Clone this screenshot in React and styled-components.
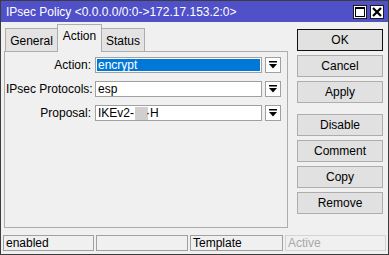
import React from "react";
import styled, { createGlobalStyle } from "styled-components";

const Global = createGlobalStyle`
  html, body { margin: 0; padding: 0; background: #f0f0f0; }
  body { font-family: "Liberation Sans", Arial, sans-serif; font-size: 12px; color: #000; }
  * { box-sizing: border-box; }
`;

const Window = styled.div`
  width: 389px;
  height: 255px;
  border: 1px solid #3c3c3c;
  background: #f0f0f0;
  display: flex;
  flex-direction: column;
  overflow: hidden;
`;

const TitleBar = styled.div`
  height: 21px;
  flex: none;
  background: #5050c8;
  color: #fff;
  display: flex;
  align-items: center;
  padding: 0 4px 0 5px;
  font-size: 12px;
`;

const TitleText = styled.div`
  flex: 1;
  white-space: nowrap;
`;

const TitleButtons = styled.div`
  display: flex;
  gap: 3px;
`;

const TitleButton = styled.div`
  width: 14px;
  height: 14px;
  background: #fff;
  border: 1px solid #1a1a1a;
  display: flex;
  align-items: center;
  justify-content: center;
`;

const Body = styled.div`
  display: flex;
  padding: 2px 0 0 3px;
`;

const LeftPane = styled.div`
  width: 284px;
  display: flex;
  flex-direction: column;
`;

const TabRow = styled.div`
  height: 28px;
  display: flex;
  align-items: flex-end;
  padding-left: 1px;
  margin-bottom: -1px;
  position: relative;
  z-index: 1;
`;

const Tab = styled.div`
  width: ${(p) => p.$w}px;
  height: ${(p) => (p.$active ? 28 : 24)}px;
  background: ${(p) => (p.$active ? "#f0f0f0" : "#e3e3e3")};
  border: 1px solid #adadad;
  border-bottom: ${(p) => (p.$active ? "none" : "1px solid #adadad")};
  margin-left: ${(p) => (p.$first ? 0 : -1)}px;
  display: flex;
  align-items: ${(p) => (p.$active ? "flex-start" : "center")};
  padding-top: ${(p) => (p.$active ? 4 : 1)}px;
  justify-content: center;
  font-size: 12px;
`;

const Panel = styled.div`
  height: 177px;
  border: 1px solid #adadad;
  background: #f0f0f0;
  padding: 5px 0 0 1px;
  display: flex;
  flex-direction: column;
  gap: 8px;
`;

const Row = styled.div`
  display: flex;
  align-items: center;
  height: 16px;
`;

const Label = styled.div`
  width: 86px;
  text-align: right;
  padding-right: 1px;
  white-space: nowrap;
`;

const Input = styled.div`
  width: 167px;
  height: 16px;
  margin-left: 3px;
  border: 1px solid #a0a0a0;
  background: #fff;
  padding: 1px;
  display: flex;
  align-items: center;
`;

const InputText = styled.div`
  flex: 1;
  height: 100%;
  display: flex;
  align-items: center;
  padding-left: 1px;
  background: ${(p) => (p.$selected ? "#0078d7" : "transparent")};
  color: ${(p) => (p.$selected ? "#fff" : "#000")};
  white-space: nowrap;
`;

const Redacted = styled.span`
  display: inline-block;
  width: 13px;
  height: 13px;
  background: #cfcfcf;
  margin-left: 1px;
`;

const DropButton = styled.div`
  width: 16px;
  height: 16px;
  margin-left: 3px;
  border: 1px solid #a0a0a0;
  background: #fff;
  display: flex;
  align-items: center;
  justify-content: center;
`;

const ButtonColumn = styled.div`
  width: 86px;
  margin-left: 9px;
  padding-top: 5px;
  display: flex;
  flex-direction: column;
  gap: 4px;
`;

const Button = styled.div`
  height: 22px;
  border: 1px solid ${(p) => (p.$default ? "#101010" : "#adadad")};
  background: #e1e1e1;
  display: flex;
  align-items: center;
  justify-content: center;
  margin-top: ${(p) => (p.$spaced ? 7 : 0)}px;
  font-size: 12px;
`;

const StatusBar = styled.div`
  display: flex;
  gap: 2px;
  padding: 7px 0 0 2px;
`;

const StatusField = styled.div`
  width: ${(p) => p.$w}px;
  height: 16px;
  border: 1px solid ${(p) => (p.$dim ? "#d4d4d4" : "#a0a0a0")};
  color: ${(p) => (p.$dim ? "#a8a8a8" : "#000")};
  padding-left: 2px;
  display: flex;
  align-items: center;
  white-space: nowrap;
`;

const DropIcon = () => (
  <svg width="8" height="8" viewBox="0 0 8 8">
    <rect x="0" y="0" width="8" height="1.5" fill="#000" />
    <path d="M0 3 H8 L4 7.5 Z" fill="#000" />
  </svg>
);

const MaxIcon = () => (
  <svg width="10" height="10" viewBox="0 0 10 10">
    <rect x="0.5" y="0.5" width="9" height="9" fill="none" stroke="#000" strokeWidth="1" />
    <rect x="0.5" y="0.5" width="9" height="1.5" fill="#000" />
  </svg>
);

const CloseIcon = () => (
  <svg width="10" height="10" viewBox="0 0 10 10">
    <path d="M1 1 L9 9 M9 1 L1 9" stroke="#000" strokeWidth="2.2" />
  </svg>
);

const fields = [
  { label: "Action:", value: "encrypt", selected: true },
  { label: "IPsec Protocols:", value: "esp" },
  { label: "Proposal:", value: "proposal" },
];

export default function App() {
  return (
    <>
      <Global />
      <Window>
        <TitleBar>
          <TitleText>IPsec Policy &lt;0.0.0.0/0:0-&gt;172.17.153.2:0&gt;</TitleText>
          <TitleButtons>
            <TitleButton><MaxIcon /></TitleButton>
            <TitleButton><CloseIcon /></TitleButton>
          </TitleButtons>
        </TitleBar>
        <Body>
          <LeftPane>
            <TabRow>
              <Tab $w={53} $first>General</Tab>
              <Tab $w={45} $active>Action</Tab>
              <Tab $w={44}>Status</Tab>
            </TabRow>
            <Panel>
              {fields.map((f) => (
                <Row key={f.label}>
                  <Label>{f.label}</Label>
                  <Input>
                    <InputText $selected={f.selected}>
                      {f.value === "proposal" ? (
                        <>
                          IKEv2-<Redacted />
                          <span style={{ marginLeft: -2 }}>·H</span>
                        </>
                      ) : (
                        f.value
                      )}
                    </InputText>
                  </Input>
                  <DropButton><DropIcon /></DropButton>
                </Row>
              ))}
            </Panel>
          </LeftPane>
          <ButtonColumn>
            <Button $default>OK</Button>
            <Button>Cancel</Button>
            <Button>Apply</Button>
            <Button $spaced>Disable</Button>
            <Button>Comment</Button>
            <Button>Copy</Button>
            <Button>Remove</Button>
          </ButtonColumn>
        </Body>
        <StatusBar>
          <StatusField $w={91}>enabled</StatusField>
          <StatusField $w={92}></StatusField>
          <StatusField $w={93}>Template</StatusField>
          <StatusField $w={101} $dim>Active</StatusField>
        </StatusBar>
      </Window>
    </>
  );
}
